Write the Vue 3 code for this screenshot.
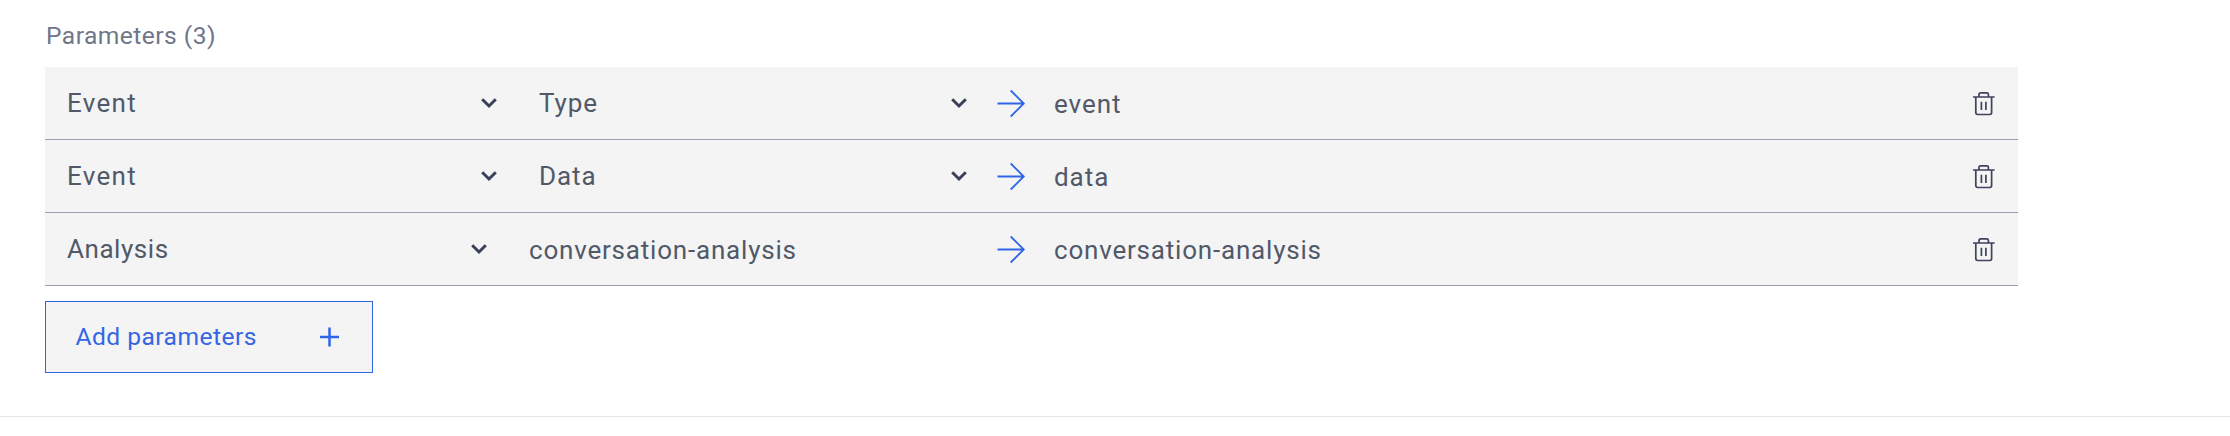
<script setup>
const rows = [
  { source: 'Event', key: 'Type', name: 'event', select: true },
  { source: 'Event', key: 'Data', name: 'data', select: true },
  { source: 'Analysis', key: 'conversation-analysis', name: 'conversation-analysis', select: false },
]
</script>

<template>
  <section class="panel">
    <h2 class="title">Parameters (3)</h2>
    <div class="list">
      <div v-for="(row, i) in rows" :key="i" class="row" :class="{ fixed: !row.select }">
        <div class="cell source">
          <span class="label" :class="row.source.toLowerCase()">{{ row.source }}</span>
          <svg class="chevron" viewBox="0 0 16 10"><path d="M1.2 1.3 8 8 14.8 1.3" /></svg>
        </div>
        <div class="cell key">
          <span class="label">{{ row.key }}</span>
          <svg v-if="row.select" class="chevron" viewBox="0 0 16 10"><path d="M1.2 1.3 8 8 14.8 1.3" /></svg>
        </div>
        <svg class="arrow" viewBox="0 0 28 28"><path d="M.5 13.5H26.6M13.7 .5 26.8 13.5 13.7 26.5" /></svg>
        <span class="label name">{{ row.name }}</span>
        <svg class="trash" viewBox="0 0 22 24">
          <path d="M0 5H21.6M2.8 5V20.6Q2.8 22.5 4.7 22.5H16.7Q18.6 22.5 18.6 20.6V5M6 5V2.5Q6 .9 7.6 .9H13.8Q15.4 .9 15.4 2.5V5M8.4 9.7V18M12.9 9.7V18" />
        </svg>
      </div>
    </div>
    <button class="add" type="button">
      <span>Add parameters</span>
      <svg class="plus" viewBox="0 0 20 20"><path d="M9.5 .5V19.5M0 10H19" /></svg>
    </button>
  </section>
</template>

<style>
body { margin: 0; background: #fff; }
</style>

<style scoped>
.panel {
  box-sizing: border-box;
  height: 417px;
  padding: 17px 212px 0 45px;
  border-bottom: 1px solid #e5e5e6;
  font-family: Roboto, "Noto Sans", sans-serif;
  color: #515969;
}
.title {
  margin: 0;
  height: 50px;
  padding-left: 1px;
  box-sizing: border-box;
  font-size: 24.6px;
  line-height: 37px;
  font-weight: 400;
  letter-spacing: .45px;
  color: #70768a;
}
.row {
  box-sizing: border-box;
  height: 73px;
  padding: 0 23.5px 0 22px;
  display: grid;
  grid-template-columns: 472px 458px 57px 1fr 22px;
  align-items: center;
  background: #f4f4f4;
  border-bottom: 1px solid #9a9fb1;
}
.row.fixed { grid-template-columns: 462px 468px 57px 1fr 22px; }
.cell {
  display: flex;
  align-items: center;
  justify-content: space-between;
}
.source { padding-right: 42.4px; }
.key { padding-right: 29.8px; }
.label {
  font-size: 26px;
  line-height: 38px;
  white-space: nowrap;
  letter-spacing: .95px;
}
.event { letter-spacing: 1.3px; }
.analysis { letter-spacing: .55px; }
.fixed .key .label,
.fixed .name { letter-spacing: .8px; }
.name { padding-top: 1px; }
.fixed .key { padding-top: 1px; }
svg { display: block; fill: none; overflow: visible; }
.chevron { width: 16px; height: 10px; stroke: #39415a; stroke-width: 3; }
.arrow { width: 28px; height: 28px; margin-top: 1px; stroke: #2f66e8; stroke-width: 1.8; }
.trash { width: 22px; height: 24px; margin-top: 1px; stroke: #3d445b; stroke-width: 1.7; }
.add {
  box-sizing: border-box;
  width: 328px;
  height: 72px;
  margin: 15px 0 0;
  padding: 0 32.5px 0 29.5px;
  display: flex;
  align-items: center;
  justify-content: space-between;
  border: 1px solid #2f66e1;
  background: #f4f4f4;
  color: #3466e3;
  font: 400 24.6px/36px Roboto, "Noto Sans", sans-serif;
  letter-spacing: .45px;
}
.plus { width: 20px; height: 20px; margin-bottom: 1px; stroke: #2f66e8; stroke-width: 2.5; }
</style>
